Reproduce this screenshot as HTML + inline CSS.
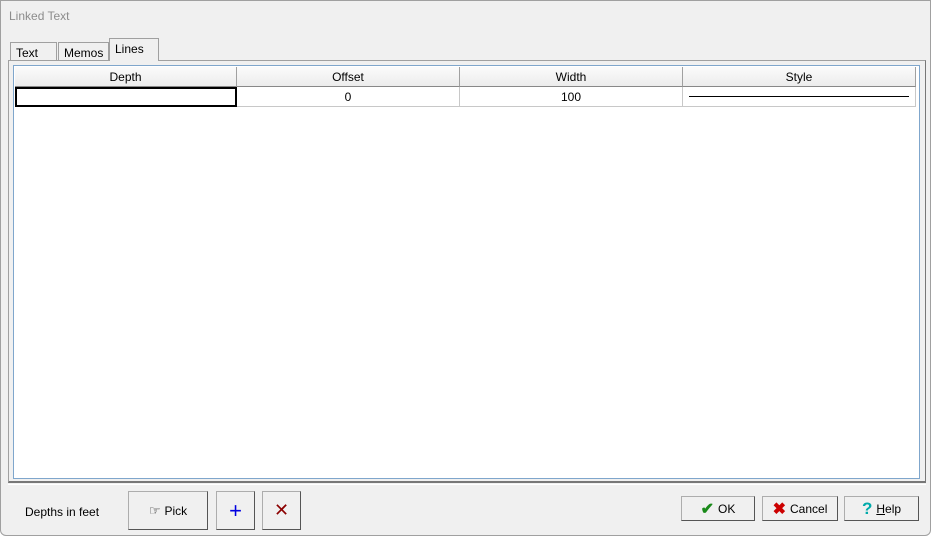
<!DOCTYPE html><html><head><style>
*{box-sizing:border-box;margin:0;padding:0}
body{width:933px;height:538px;background:#fff;font-family:"Liberation Sans",sans-serif;font-size:12px;color:#000;position:relative;overflow:hidden}
.win{position:absolute;left:0;top:0;width:931px;height:536px;background:#f0f0f0;box-shadow:inset 0 0 0 1px #a0a0a0;border-radius:0 0 6px 6px}
.a{position:absolute}
.title{left:9px;top:9px;color:#8c8c8c;font-size:12px}
.tab{top:40px;height:21px;border:1px solid #a0a0a0;border-bottom:none;background:#f0f0f0;padding:3px 5px}
.panel{left:8px;top:60px;width:918px;height:423px;border:1px solid #a0a0a0;border-right-color:#777;border-bottom:2px solid #777;background:#f0f0f0}
.grid{left:13px;top:65px;width:907px;height:414px;border:1px solid #7fa6cc;background:#fff}
.hc{top:67px;height:20px;border-right:1px solid #a0a0a0;border-bottom:1px solid #888;text-align:center;line-height:20px;background:linear-gradient(#fbfbfb,#ececec)}
.c{top:87px;height:20px;border-right:1px solid #c8c8c8;border-bottom:1px solid #c8c8c8;text-align:center;line-height:20px}
.btn{border:1px solid #adadad;border-right-color:#555;border-bottom-color:#555;background:#f0f0f0;display:flex;align-items:center;justify-content:center;gap:4px}
</style></head><body><div class="win">
<div class="a title">Linked Text</div>
<div class="a tab" style="left:10px;width:47px;top:42px">Text</div>
<div class="a tab" style="left:58px;width:51px;top:42px">Memos</div>
<div class="a panel"></div>
<div class="a tab" style="left:109px;width:50px;top:38px;height:23px;padding-top:3px;z-index:2">Lines</div>
<div class="a grid"></div>
<div class="a hc" style="left:15px;width:222px">Depth</div>
<div class="a hc" style="left:237px;width:223px">Offset</div>
<div class="a hc" style="left:460px;width:223px">Width</div>
<div class="a hc" style="left:683px;width:233px">Style</div>
<div class="a c" style="left:15px;width:222px;border:2px solid #000"></div>
<div class="a c" style="left:237px;width:223px">0</div>
<div class="a c" style="left:460px;width:223px">100</div>
<div class="a c" style="left:683px;width:233px"><div style="position:absolute;left:6px;right:6px;top:9px;height:1px;background:#000"></div></div>
<div class="a" style="left:8px;top:484px;width:918px;height:45px;border-top:1px solid #fff"></div>
<div class="a" style="left:25px;top:505px">Depths in feet</div>
<div class="a btn" style="left:128px;top:491px;width:80px;height:39px"><span style="font-size:13px">☞</span> Pick</div>
<div class="a btn" style="left:216px;top:491px;width:39px;height:39px;color:#0000e0;font-size:22px">+</div>
<div class="a btn" style="left:262px;top:491px;width:39px;height:39px;color:#8b0000;font-size:18px">✕</div>
<div class="a btn" style="left:681px;top:496px;width:74px;height:25px"><span style="color:#1a8a1a;font-size:16px;font-weight:bold">✔</span> OK</div>
<div class="a btn" style="left:762px;top:496px;width:76px;height:25px"><span style="color:#c00;font-size:16px;font-weight:bold">✖</span> Cancel</div>
<div class="a btn" style="left:844px;top:496px;width:75px;height:25px"><span style="color:#0aa;font-size:17px;font-weight:bold">?</span><span><u>H</u>elp</span></div>
</div></body></html>
